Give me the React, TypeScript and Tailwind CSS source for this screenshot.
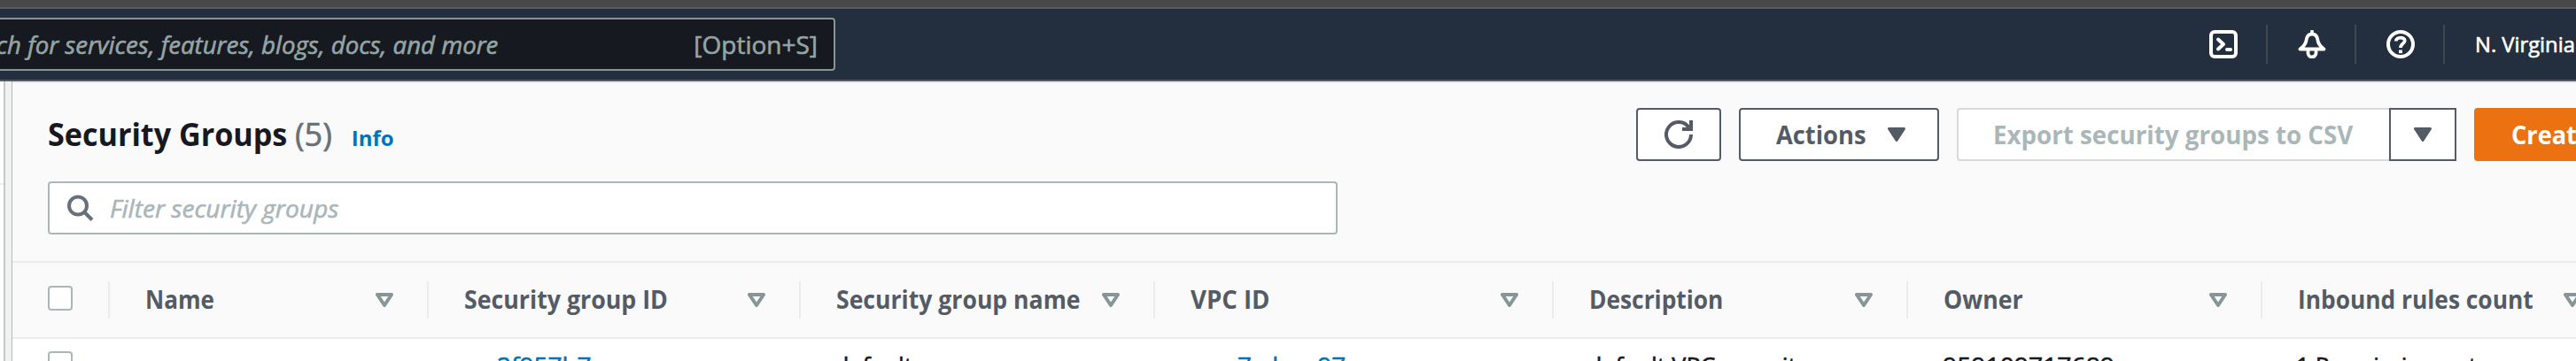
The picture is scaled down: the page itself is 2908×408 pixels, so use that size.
import type { ReactNode } from 'react';

function SortIcon() {
  return (
    <svg className="mt-0.5 h-4 w-5 shrink-0" viewBox="0 0 20 16" fill="none" stroke="#879596" strokeWidth="4" strokeLinejoin="round">
      <path d="M2 2h16l-8 12z" />
    </svg>
  );
}

function Caret() {
  return (
    <svg className="h-4 w-5 shrink-0" viewBox="0 0 20 16" fill="#545b64" stroke="#545b64" strokeWidth="3" strokeLinejoin="round">
      <path d="M1.5 1.5h17L10 14.5z" />
    </svg>
  );
}

function NavIcon({ children }: { children: ReactNode }) {
  return (
    <div className="flex h-11 w-[100px] shrink-0 items-center justify-center border-r-2 border-[#414750] pl-0.5">
      <svg className="size-8" viewBox="0 0 32 32" fill="none" stroke="white" strokeWidth="4">
        {children}
      </svg>
    </div>
  );
}

function Checkbox() {
  return <div className="size-7 shrink-0 rounded border-2 border-[#aab7b8] bg-white" />;
}

const columns = [
  { label: 'Name', width: 'w-[360px]', text: 'scale-x-[0.93]' },
  { label: 'Security group ID', width: 'w-[420px]', text: 'scale-x-[0.955]' },
  { label: 'Security group name', width: 'w-[400px]', text: 'scale-x-[0.95]' },
  { label: 'VPC ID', width: 'w-[450px]', text: 'scale-x-[0.985]' },
  { label: 'Description', width: 'w-[400px]', text: 'scale-x-[0.94]' },
  { label: 'Owner', width: 'w-[400px]', text: 'scale-x-[0.955]' },
  { label: 'Inbound rules count', width: 'w-[400px]', text: 'scale-x-[0.94]' },
];

const cells = [
  { value: '', cell: 'w-[360px] pl-10', text: '' },
  { value: '2f957b7', cell: 'w-[420px] pl-[77px] text-[#0073bb]', text: '' },
  { value: 'default', cell: 'w-[400px] pl-[38px]', text: 'scale-x-[0.96]' },
  { value: '7cdeac97', cell: 'w-[450px] pl-[93px] text-[#0073bb]', text: 'scale-x-[0.99]' },
  { value: 'default VPC security gr...', cell: 'w-[400px] pl-[38px]', text: 'scale-x-[0.96]' },
  { value: '959109717689', cell: 'w-[400px] pl-[39px]', text: 'scale-x-[1.01]' },
  { value: '1 Permission entry', cell: 'w-[400px] pl-[38px]', text: 'scale-x-[0.935]' },
];

export default function App() {
  return (
    <div className="flex h-[408px] w-[2908px] flex-col overflow-hidden whitespace-nowrap bg-white font-['Open_Sans','Noto_Sans',sans-serif] text-[28px] leading-9 text-[#16191f] [-webkit-text-stroke:0.6px]">
      <div className="h-2.5 shrink-0 border-b-2 border-[#5b5958] bg-[#484848]" />

      <header className="flex h-[82px] shrink-0 items-center justify-between border-b-2 border-[#545b64] bg-[#232f3e]">
        <div className="flex h-[60px] w-[943px] items-center justify-between rounded-r border-y-2 border-r-2 border-[#879596] bg-[#16191f] pr-[18px] text-[#95a5a6]">
          <div className="flex w-[562px] justify-end overflow-hidden">
            <span className="shrink-0 origin-right scale-x-[0.985] italic">Search for services, features, blogs, docs, and more</span>
          </div>
          <span>[Option+S]</span>
        </div>
        <nav className="flex w-[448px] items-center">
          <NavIcon>
            <rect x="2" y="2" width="28" height="28" rx="4" />
            <path d="M10 10.5l6 5.5-6 5.5M20 22h4" strokeLinecap="round" strokeLinejoin="round" />
          </NavIcon>
          <NavIcon>
            <path d="M16 1.5v3M16 4.5c-4.200 0-6 3-6.500 7C9 16 6.500 18.500 2.500 21.500h27C25.500 18.500 23 16 22.500 11.500c-.5-4-2.300-7-6.500-7z" strokeWidth="3.800" strokeLinecap="round" strokeLinejoin="round" />
            <path d="M11.500 22v4a4.500 4.500 0 0 0 9 0v-4" strokeWidth="3.800" />
          </NavIcon>
          <NavIcon>
            <circle cx="16" cy="16" r="14" />
            <path d="M10.800 12.500c0-5.200 9.900-5.200 9.900-.5 0 3.500-4.700 3-4.700 8" strokeWidth="3.800" />
            <path d="M14 24.300h4" strokeWidth="3.600" />
          </NavIcon>
          <span className="ml-[34px] origin-left scale-x-[0.99] text-2xl text-white">N. Virginia</span>
        </nav>
      </header>

      <div className="flex min-h-0 flex-1">
        <div className="w-1 shrink-0 bg-white">
          <div className="h-[117px] border-b-2 border-[#eaeded]" />
        </div>
        <div className="w-2.5 shrink-0 border-l-2 border-r border-l-[#c3c9cb] border-r-[#b4bbbd] bg-[#f0f2f2]" />

        <main className="w-[2894px] shrink-0">
          <section className="h-[205px] border-y-2 border-[#eaeded] bg-[#fafafa] pl-10 pt-7">
            <div className="flex h-[60px] items-center justify-between">
              <div className="flex items-baseline">
                <h1 className="w-[272px] text-4xl leading-[48px] font-bold [-webkit-text-stroke:0]">
                  <span className="inline-block origin-left scale-x-[0.948]">Security Groups</span>
                </h1>
                <span className="ml-[7px] text-4xl text-[#687078]">(5)</span>
                <a className="ml-[22px] text-2xl font-bold text-[#0073bb] [-webkit-text-stroke:0]">Info</a>
              </div>
              <div className="flex w-[1061px] font-bold text-[#545b64] [-webkit-text-stroke:0]">
                <button className="mr-5 flex h-[60px] w-24 shrink-0 items-center justify-center rounded border-2 border-[#545b64] bg-white">
                  <svg className="size-8" viewBox="0 0 32 32" fill="none" stroke="#545b64" strokeWidth="4">
                    <path d="M30 16A14 14 0 1 1 27.500 8" />
                    <path d="M30 0v10H20" />
                  </svg>
                </button>
                <button className="mr-5 flex h-[60px] w-[226px] shrink-0 items-center justify-between rounded border-2 border-[#545b64] bg-white pr-9 pl-10">
                  <span className="origin-left scale-x-[0.975]">Actions</span>
                  <Caret />
                </button>
                <button className="flex h-[60px] w-[488px] shrink-0 items-center rounded-l border-y-2 border-l-2 border-[#d5dbdb] bg-white pl-[39px] text-[#aab7b8]">
                  <span className="origin-left scale-x-[0.99]">Export security groups to CSV</span>
                </button>
                <button className="mr-5 flex h-[60px] w-[76px] shrink-0 items-center justify-center border-2 border-[#545b64] bg-white">
                  <Caret />
                </button>
                <button className="flex h-[60px] w-[380px] shrink-0 items-center rounded bg-[#ec7211] pl-[42px] text-white">
                  <span className="origin-left scale-x-[0.97]">Create security group</span>
                </button>
              </div>
            </div>

            <div className="mt-[23px] flex h-[60px] w-[1456px] items-center rounded border-2 border-[#aab7b8] bg-white pl-5">
              <svg className="h-[30px] w-[30px]" viewBox="0 0 30 30" fill="none" stroke="#687078" strokeWidth="4">
                <circle cx="12" cy="12.500" r="10" />
                <path d="M19 19.500l9 9" />
              </svg>
              <span className="ml-[18px] origin-left scale-x-[1.005] italic text-[#aab7b8]">Filter security groups</span>
            </div>
          </section>

          <section className="flex h-[86px] items-center border-b-2 border-[#eaeded] bg-[#fafafa] font-bold text-[#545b64] [-webkit-text-stroke:0]">
            <div className="flex h-[42px] w-[110px] shrink-0 items-center border-r-2 border-[#eaeded] pb-1 pl-10">
              <Checkbox />
            </div>
            {columns.map((c) => (
              <div key={c.label} className={`flex h-[42px] shrink-0 items-center justify-between border-r-2 border-[#eaeded] pr-[38px] pb-0.5 pl-10 ${c.width}`}>
                <span className={`origin-left ${c.text}`}>{c.label}</span>
                <SortIcon />
              </div>
            ))}
          </section>

          <section className="flex h-14 items-center bg-white">
            <div className="w-[110px] shrink-0 pl-10">
              <Checkbox />
            </div>
            {cells.map((c, i) => (
              <div key={i} className={`shrink-0 pt-[3px] ${c.cell}`}>
                <span className={`inline-block origin-left ${c.text}`}>{c.value}</span>
              </div>
            ))}
          </section>
        </main>
      </div>
    </div>
  );
}
